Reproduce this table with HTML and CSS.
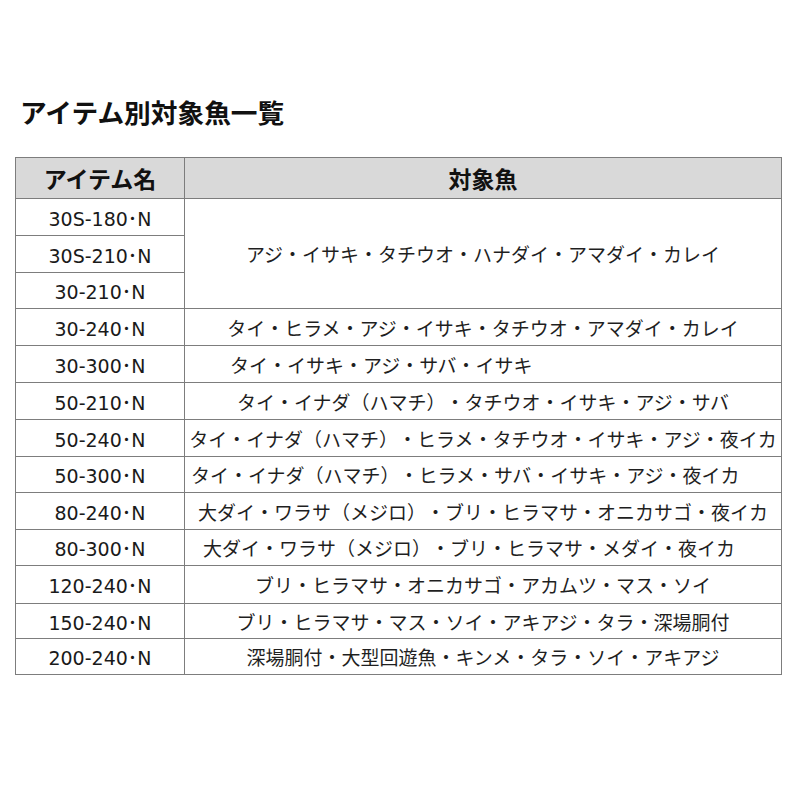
FILE: index.html
```html
<!DOCTYPE html>
<html lang="ja">
<head>
<meta charset="utf-8">
<title>アイテム別対象魚一覧</title>
<link rel="stylesheet" href="styles.css">
</head>
<body>
<div class="page">
  <h1 class="title">アイテム別対象魚一覧</h1>
  <table class="fish-table">
    <thead>
      <tr>
        <th class="col-item">アイテム名</th>
        <th class="col-fish">対象魚</th>
      </tr>
    </thead>
    <tbody>
      <tr class="r37"><td class="item">30S-180･N</td><td class="fish" rowspan="3">アジ・イサキ・タチウオ・ハナダイ・アマダイ・カレイ</td></tr>
      <tr class="r37"><td class="item">30S-210･N</td></tr>
      <tr class="r36"><td class="item">30-210･N</td></tr>
      <tr class="r37"><td class="item">30-240･N</td><td class="fish">タイ・ヒラメ・アジ・イサキ・タチウオ・アマダイ・カレイ</td></tr>
      <tr class="r37"><td class="item">30-300･N</td><td class="fish fish-left-a">タイ・イサキ・アジ・サバ・イサキ</td></tr>
      <tr class="r37"><td class="item">50-210･N</td><td class="fish">タイ・イナダ（ハマチ）・タチウオ・イサキ・アジ・サバ</td></tr>
      <tr class="r37"><td class="item">50-240･N</td><td class="fish">タイ・イナダ（ハマチ）・ヒラメ・タチウオ・イサキ・アジ・夜イカ</td></tr>
      <tr class="r36"><td class="item">50-300･N</td><td class="fish fish-left-b">タイ・イナダ（ハマチ）・ヒラメ・サバ・イサキ・アジ・夜イカ</td></tr>
      <tr class="r37"><td class="item">80-240･N</td><td class="fish">大ダイ・ワラサ（メジロ）・ブリ・ヒラマサ・オニカサゴ・夜イカ</td></tr>
      <tr class="r36"><td class="item">80-300･N</td><td class="fish fish-left-c">大ダイ・ワラサ（メジロ）・ブリ・ヒラマサ・メダイ・夜イカ</td></tr>
      <tr class="r38"><td class="item">120-240･N</td><td class="fish">ブリ・ヒラマサ・オニカサゴ・アカムツ・マス・ソイ</td></tr>
      <tr class="r35"><td class="item">150-240･N</td><td class="fish">ブリ・ヒラマサ・マス・ソイ・アキアジ・タラ・深場胴付</td></tr>
      <tr class="r36"><td class="item">200-240･N</td><td class="fish">深場胴付・大型回遊魚・キンメ・タラ・ソイ・アキアジ</td></tr>
    </tbody>
  </table>
</div>
</body>
</html>
```
FILE: styles.css
```css
html, body {
  margin: 0;
  padding: 0;
  background: #ffffff;
}

body {
  font-family: "DejaVu Sans", "Noto Sans CJK JP", sans-serif;
  color: #1a1a1a;
  text-spacing-trim: space-all;
}

.page {
  padding: 99px 18px 0 15px;
}

.title {
  margin: 0 0 32px 5px;
  font-family: "Noto Sans CJK JP", sans-serif;
  font-size: 26.7px;
  line-height: 26px;
  font-weight: 700;
  color: #111111;
  letter-spacing: 0;
}

.fish-table {
  border-collapse: collapse;
  width: 767px;
  table-layout: fixed;
  border: 1px solid #7d7d7d;
}

.fish-table th,
.fish-table td {
  border: 1px solid #7d7d7d;
  padding: 0;
  white-space: nowrap;
  text-align: center;
  vertical-align: middle;
  text-spacing-trim: space-all;
}

.fish-table th {
  background: #d9d9d9;
  height: 40px;
  font-family: "Noto Sans CJK JP", sans-serif;
  font-size: 23px;
  font-weight: 700;
  color: #111111;
}

.col-item {
  width: 168px;
}

.item {
  font-size: 19px;
  color: #1a1a1a;
}

.fish {
  font-family: "Noto Sans CJK JP", sans-serif;
  font-size: 19px;
  color: #1f1f1f;
}

.fish-table .fish-left-a {
  text-align: left;
  padding-left: 45px;
}

.fish-table .fish-left-b {
  text-align: left;
  padding-left: 6px;
}

.fish-table .fish-left-c {
  text-align: left;
  padding-left: 18px;
}

.r35 td { height: 34px; }
.r36 td { height: 35px; }
.r37 td { height: 36px; }
.r38 td { height: 37px; }
```
